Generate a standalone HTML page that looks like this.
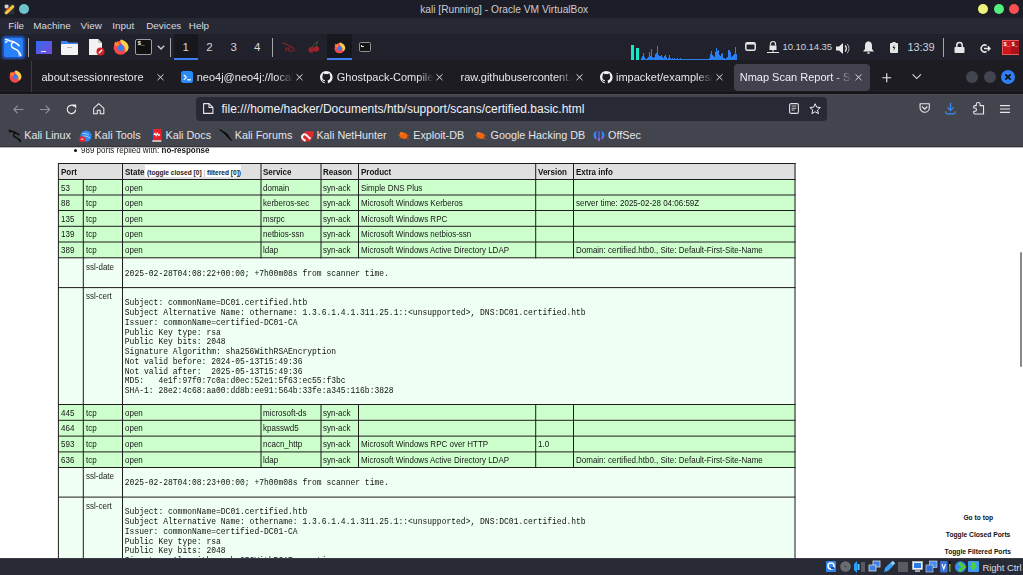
<!DOCTYPE html>
<html><head><meta charset="utf-8"><style>
*{margin:0;padding:0;box-sizing:border-box}
html,body{width:1023px;height:575px;overflow:hidden;background:#fff;font-family:"Liberation Sans",sans-serif}
.a{position:absolute}
.t{position:absolute;white-space:nowrap;line-height:1}
svg{position:absolute;overflow:visible}
.mi{color:#d9dbe0;font-size:9.6px;top:21px}
.tabt{color:#e6e6ea;font-size:11px;top:72px}
.bm{color:#e2e2e6;font-size:11px;top:130px}
.c8{position:absolute;white-space:nowrap;line-height:1;font-size:8px;color:#151515}
.cb{position:absolute;white-space:nowrap;line-height:1;font-size:8px;font-weight:bold;color:#111}
.mono{position:absolute;font-family:"Liberation Mono",monospace;font-size:8px;color:#111;line-height:7.967px;white-space:pre;transform:scaleY(1.22);transform-origin:0 0}
</style></head><body>
<div class="a" style="left:0px;top:0px;width:1023px;height:18px;background:#1c1d27;"></div>
<div class="t" style="left:420.2px;top:4.77px;font-size:10.2px;color:#c9cdd5;">kali [Running] - Oracle VM VirtualBox</div>
<svg style="left:3.6px;top:4px" width="10.2" height="10.3" viewBox="0 0 10.2 10.3"><rect x="0" y="0" width="10.2" height="10.3" fill="#30323a"/><path d="M2.2 8.8 L8.8 2.6" stroke="#fcc540" stroke-width="3" stroke-linecap="round"/><circle cx="2.6" cy="2.4" r="2" fill="#d4d4d8"/><path d="M2.5 5.2 C3.5 4.3 4.5 4.3 5.5 5" stroke="#e8560f" stroke-width="1.4" fill="none"/></svg>
<svg style="left:19px;top:4px" width="10" height="10"><circle cx="5" cy="5" r="5" fill="#6ec3cd"/></svg>
<svg style="left:978px;top:4px" width="10" height="10"><circle cx="5" cy="5" r="5" fill="#eef27c"/></svg>
<svg style="left:993.8px;top:4px" width="10" height="10"><circle cx="5" cy="5" r="5" fill="#52f07c"/></svg>
<svg style="left:1009.4px;top:4px" width="10" height="10"><circle cx="5" cy="5" r="5" fill="#f84f50"/></svg>
<div class="a" style="left:0px;top:18px;width:1023px;height:16px;background:#262833;"></div>
<div class="t" style="left:8.2px;top:21.22px;font-size:9.9px;color:#d9dbe0;">File</div>
<div class="t" style="left:33.3px;top:21.22px;font-size:9.9px;color:#d9dbe0;">Machine</div>
<div class="t" style="left:80.6px;top:21.22px;font-size:9.9px;color:#d9dbe0;">View</div>
<div class="t" style="left:112.3px;top:21.22px;font-size:9.9px;color:#d9dbe0;">Input</div>
<div class="t" style="left:146.2px;top:21.22px;font-size:9.9px;color:#d9dbe0;">Devices</div>
<div class="t" style="left:188.8px;top:21.22px;font-size:9.9px;color:#d9dbe0;">Help</div>
<div class="a" style="left:0px;top:34px;width:1023px;height:26px;background:#20212b;"></div>
<div class="a" style="left:3.5px;top:37.7px;width:19px;height:19px;border-radius:2px;background:#2a80f8;box-shadow:0 0 2.5px 1.5px rgba(30,110,255,0.75)"></div>
<svg style="left:3.5px;top:37.7px" width="19" height="19" viewBox="0 0 19 19"><path d="M1 1.2 L4 2 L6 3 C9 3.3 12 4 15.5 8.3" stroke="#fff" stroke-width="1.5" fill="none"/><path d="M0.8 3.5 L5 2.5 L1.5 5.5 Z" fill="#e8f0ff"/><path d="M9.5 4 C6.5 5.5 6.5 9 10 10.5 C13 11.5 15.5 13 17 18" stroke="#fff" stroke-width="1.4" fill="none"/><path d="M14.5 14 L15.5 18.5" stroke="#dde8ff" stroke-width="1" fill="none"/></svg>
<div class="a" style="left:28.2px;top:38.2px;width:1.2px;height:18.4px;background:#a4a6ac;"></div>
<div class="a" style="left:36px;top:40.5px;width:16px;height:13px;background:linear-gradient(135deg,#2f6cf0,#7a4ad8)"></div>
<div class="a" style="left:41px;top:51px;width:5px;height:1px;background:#e8e8ff;"></div>
<svg style="left:61px;top:40px" width="17" height="15" viewBox="0 0 17 15"><path d="M0 1 L6 1 L7.5 2.5 L17 2.5 L17 5 L0 5 Z" fill="#3b82f6"/><rect x="0" y="4" width="17" height="11" rx="1" fill="#f4f4f6"/><rect x="6" y="7" width="5" height="1" fill="#bbb"/></svg>
<svg style="left:89px;top:39px" width="16" height="17" viewBox="0 0 16 17"><path d="M0 0 L9 0 L13 4 L13 16 L0 16 Z" fill="#f2f2f2"/><path d="M9 0 L9 4 L13 4 Z" fill="#ccc"/><circle cx="11.5" cy="12.5" r="4" fill="#d01f26"/><path d="M9.8 14.2 L13.2 10.8" stroke="#fff" stroke-width="1.3"/></svg>
<svg style="left:113px;top:39.3px" width="16" height="16" viewBox="0 0 16 16"><circle cx="7.6" cy="8.8" r="7" fill="#f64a4a"/><path d="M7.2 1.5 C8 0.2 9 0.4 9.5 1 C12 1.8 15.6 4.5 15.6 8.2 C15.6 10.5 14.5 12 12.8 13 C12.6 10.5 12 8 10 6.3 C8.6 5 7.5 4 7.2 1.5 Z" fill="#fcd14f"/><path d="M1.2 5 L2.4 2.2 L3.6 4 L4.6 2.4 L5.8 4.8 L6.6 6.5 L3 7.5 Z" fill="#ff8a25"/><path d="M12.8 13 C13 11.5 12.6 10 11.8 9.2 L11.2 11.5 Z" fill="#ff9a30"/><circle cx="7.9" cy="8.9" r="3.1" fill="#3a7cf2"/><path d="M6.2 6.3 C7 5.3 8.5 5.2 9.4 6 L8 7 Z" fill="#7b4be0"/></svg>
<div class="a" style="left:135px;top:39.2px;width:16.6px;height:15.6px;border:1.2px solid #9b9da3;border-radius:2px;background:#111"></div>
<div class="t" style="left:137.5px;top:40.5px;font-size:6px;color:#eee;font-weight:bold;font-family:'Liberation Mono'">$_</div>
<svg style="left:156.5px;top:44.5px" width="8" height="5" viewBox="0 0 8 5"><path d="M0.8 0.8 L4 4 L7.2 0.8" stroke="#c9ccd2" stroke-width="1.4" fill="none"/></svg>
<div class="a" style="left:170.3px;top:38.2px;width:1.2px;height:18.4px;background:#a4a6ac;"></div>
<div class="a" style="left:174px;top:34px;width:24px;height:26px;background:#17181e;"></div>
<div class="a" style="left:174px;top:57.8px;width:24px;height:2.2px;background:#3d7ff0;"></div>
<div class="t" style="left:175.7px;width:20px;text-align:center;top:42.17px;font-size:11.5px;color:#d4d8de">1</div>
<div class="t" style="left:199.4px;width:20px;text-align:center;top:42.17px;font-size:11.5px;color:#d4d8de">2</div>
<div class="t" style="left:223.6px;width:20px;text-align:center;top:42.17px;font-size:11.5px;color:#d4d8de">3</div>
<div class="t" style="left:247.3px;width:20px;text-align:center;top:42.17px;font-size:11.5px;color:#d4d8de">4</div>
<div class="a" style="left:272.2px;top:38.2px;width:1.2px;height:18.4px;background:#a4a6ac;"></div>
<svg style="left:282px;top:42px" width="13" height="10" viewBox="0 0 13 10"><path d="M0.5 0.5 C3 2 6 3 8 4 C10 5 12 7 12.5 9 M4 5 L4 9 M4 7 L7 7 M7 5 L7 9 L11 9" stroke="#8e2424" stroke-width="1.1" fill="none"/></svg>
<svg style="left:308px;top:41px" width="12" height="12" viewBox="0 0 12 12"><path d="M4 7 C5 4 7 2 10 0.5 M8.5 7 C8 4 9 2 10 0.5" stroke="#3f5a2a" stroke-width="0.9" fill="none"/><circle cx="3.2" cy="8.8" r="2.8" fill="#96222a"/><circle cx="8.3" cy="8" r="2.8" fill="#a0242c"/></svg>
<div class="a" style="left:327px;top:34px;width:25px;height:26px;background:#17181e;"></div>
<div class="a" style="left:327px;top:57.6px;width:25px;height:2.4px;background:#3d7ff0;"></div>
<svg style="left:333.5px;top:41.5px" width="11.5" height="11.5" viewBox="0 0 16 16"><circle cx="7.6" cy="8.8" r="7" fill="#f64a4a"/><path d="M7.2 1.5 C8 0.2 9 0.4 9.5 1 C12 1.8 15.6 4.5 15.6 8.2 C15.6 10.5 14.5 12 12.8 13 C12.6 10.5 12 8 10 6.3 C8.6 5 7.5 4 7.2 1.5 Z" fill="#fcd14f"/><path d="M1.2 5 L2.4 2.2 L3.6 4 L4.6 2.4 L5.8 4.8 L6.6 6.5 L3 7.5 Z" fill="#ff8a25"/><path d="M12.8 13 C13 11.5 12.6 10 11.8 9.2 L11.2 11.5 Z" fill="#ff9a30"/><circle cx="7.9" cy="8.9" r="3.1" fill="#3a7cf2"/><path d="M6.2 6.3 C7 5.3 8.5 5.2 9.4 6 L8 7 Z" fill="#7b4be0"/></svg>
<div class="a" style="left:358.5px;top:42px;width:12.3px;height:10.4px;border:1.2px solid #8e9096;border-radius:1.5px;background:#141414"></div>
<div class="a" style="left:361px;top:44.5px;width:1px;height:2px;background:#ddd;"></div>
<div class="a" style="left:362px;top:46px;width:2px;height:0.8px;background:#ddd;"></div>
<div class="a" style="left:631px;top:45.3px;width:3.4px;height:14.7px;background:#19e8c8;"></div>
<div class="a" style="left:635.9px;top:47.6px;width:3.2px;height:12.4px;background:#19e8c8;"></div>
<svg style="left:641px;top:44px" width="96" height="16" viewBox="0 0 96 16"><rect x="0" y="14" width="1" height="2" fill="#2a80f2"/><rect x="1" y="12" width="1" height="4" fill="#2a80f2"/><rect x="2" y="9" width="1" height="7" fill="#2a80f2"/><rect x="3" y="13" width="1" height="3" fill="#2a80f2"/><rect x="4" y="15" width="1" height="1" fill="#2a80f2"/><rect x="5" y="15" width="1" height="1" fill="#2a80f2"/><rect x="6" y="14" width="1" height="2" fill="#2a80f2"/><rect x="7" y="13" width="1" height="3" fill="#2a80f2"/><rect x="8" y="8" width="1" height="8" fill="#2a80f2"/><rect x="9" y="12" width="1" height="4" fill="#2a80f2"/><rect x="10" y="5" width="1" height="11" fill="#2a80f2"/><rect x="11" y="13" width="1" height="3" fill="#2a80f2"/><rect x="12" y="14" width="1" height="2" fill="#2a80f2"/><rect x="13" y="13" width="1" height="3" fill="#2a80f2"/><rect x="14" y="10" width="1" height="6" fill="#2a80f2"/><rect x="15" y="9" width="1" height="7" fill="#2a80f2"/><rect x="16" y="2" width="1" height="14" fill="#2a80f2"/><rect x="17" y="11" width="1" height="5" fill="#2a80f2"/><rect x="18" y="12" width="1" height="4" fill="#2a80f2"/><rect x="19" y="12" width="1" height="4" fill="#2a80f2"/><rect x="20" y="11" width="1" height="5" fill="#2a80f2"/><rect x="21" y="13" width="1" height="3" fill="#2a80f2"/><rect x="22" y="14" width="1" height="2" fill="#2a80f2"/><rect x="23" y="12" width="1" height="4" fill="#2a80f2"/><rect x="24" y="11" width="1" height="5" fill="#2a80f2"/><rect x="25" y="13" width="1" height="3" fill="#2a80f2"/><rect x="26" y="15" width="1" height="1" fill="#2a80f2"/><rect x="27" y="14" width="1" height="2" fill="#2a80f2"/><rect x="28" y="11" width="1" height="5" fill="#2a80f2"/><rect x="29" y="14" width="1" height="2" fill="#2a80f2"/><rect x="30" y="15" width="1" height="1" fill="#2a80f2"/><rect x="31" y="14" width="1" height="2" fill="#2a80f2"/><rect x="32" y="15" width="1" height="1" fill="#2a80f2"/><rect x="33" y="14" width="1" height="2" fill="#2a80f2"/><rect x="34" y="15" width="1" height="1" fill="#2a80f2"/><rect x="35" y="15" width="1" height="1" fill="#2a80f2"/><rect x="36" y="14" width="1" height="2" fill="#2a80f2"/><rect x="37" y="15" width="1" height="1" fill="#2a80f2"/><rect x="38" y="15" width="1" height="1" fill="#2a80f2"/><rect x="39" y="14" width="1" height="2" fill="#2a80f2"/><rect x="40" y="15" width="1" height="1" fill="#2a80f2"/><rect x="41" y="15" width="1" height="1" fill="#2a80f2"/><rect x="42" y="15" width="1" height="1" fill="#2a80f2"/><rect x="43" y="15" width="1" height="1" fill="#2a80f2"/><rect x="44" y="15" width="1" height="1" fill="#2a80f2"/><rect x="45" y="15" width="1" height="1" fill="#2a80f2"/><rect x="46" y="15" width="1" height="1" fill="#2a80f2"/><rect x="47" y="15" width="1" height="1" fill="#2a80f2"/><rect x="48" y="15" width="1" height="1" fill="#2a80f2"/><rect x="49" y="15" width="1" height="1" fill="#2a80f2"/><rect x="50" y="15" width="1" height="1" fill="#2a80f2"/><rect x="51" y="15" width="1" height="1" fill="#2a80f2"/><rect x="52" y="15" width="1" height="1" fill="#2a80f2"/><rect x="53" y="15" width="1" height="1" fill="#2a80f2"/><rect x="54" y="15" width="1" height="1" fill="#2a80f2"/><rect x="55" y="15" width="1" height="1" fill="#2a80f2"/><rect x="56" y="15" width="1" height="1" fill="#2a80f2"/><rect x="57" y="15" width="1" height="1" fill="#2a80f2"/><rect x="58" y="15" width="1" height="1" fill="#2a80f2"/><rect x="59" y="15" width="1" height="1" fill="#2a80f2"/><rect x="60" y="15" width="1" height="1" fill="#2a80f2"/><rect x="61" y="15" width="1" height="1" fill="#2a80f2"/><rect x="62" y="15" width="1" height="1" fill="#2a80f2"/><rect x="63" y="15" width="1" height="1" fill="#2a80f2"/><rect x="64" y="15" width="1" height="1" fill="#2a80f2"/><rect x="65" y="15" width="1" height="1" fill="#2a80f2"/><rect x="66" y="15" width="1" height="1" fill="#2a80f2"/><rect x="67" y="15" width="1" height="1" fill="#2a80f2"/><rect x="68" y="14" width="1" height="2" fill="#2a80f2"/><rect x="69" y="10" width="1" height="6" fill="#2a80f2"/><rect x="70" y="7" width="1" height="9" fill="#2a80f2"/><rect x="71" y="11" width="1" height="5" fill="#2a80f2"/><rect x="72" y="12" width="1" height="4" fill="#2a80f2"/><rect x="73" y="13" width="1" height="3" fill="#2a80f2"/><rect x="74" y="8" width="1" height="8" fill="#2a80f2"/><rect x="75" y="4" width="1" height="12" fill="#2a80f2"/><rect x="76" y="7" width="1" height="9" fill="#2a80f2"/><rect x="77" y="6" width="1" height="10" fill="#2a80f2"/><rect x="78" y="11" width="1" height="5" fill="#2a80f2"/><rect x="79" y="12" width="1" height="4" fill="#2a80f2"/><rect x="80" y="10" width="1" height="6" fill="#2a80f2"/><rect x="81" y="9" width="1" height="7" fill="#2a80f2"/><rect x="82" y="14" width="1" height="2" fill="#2a80f2"/><rect x="83" y="14" width="1" height="2" fill="#2a80f2"/><rect x="84" y="15" width="1" height="1" fill="#2a80f2"/><rect x="85" y="14" width="1" height="2" fill="#2a80f2"/><rect x="86" y="13" width="1" height="3" fill="#2a80f2"/><rect x="87" y="6" width="1" height="10" fill="#2a80f2"/><rect x="88" y="6" width="1" height="10" fill="#2a80f2"/><rect x="89" y="8" width="1" height="8" fill="#2a80f2"/><rect x="90" y="13" width="1" height="3" fill="#2a80f2"/><rect x="91" y="12" width="1" height="4" fill="#2a80f2"/><rect x="92" y="11" width="1" height="5" fill="#2a80f2"/><rect x="93" y="10" width="1" height="6" fill="#2a80f2"/><rect x="94" y="3" width="1" height="13" fill="#2a80f2"/><rect x="95" y="10" width="1" height="6" fill="#2a80f2"/></svg>
<svg style="left:744.5px;top:42px" width="11" height="9" viewBox="0 0 11 9"><rect x="0.8" y="0.8" width="9.4" height="7.4" rx="1.5" fill="none" stroke="#e6e6e6" stroke-width="1.5"/><rect x="1" y="1" width="9" height="1.6" fill="#e6e6e6"/></svg>
<svg style="left:767px;top:41px" width="12" height="12" viewBox="0 0 12 12"><path d="M3.5 4.5 V3 A2.5 2.5 0 0 1 8.5 3 V4.5" stroke="#e6e6e6" stroke-width="1.2" fill="none"/><rect x="2.5" y="4.5" width="7" height="4.5" fill="#e6e6e6"/><rect x="5.5" y="9" width="1" height="2" fill="#e6e6e6"/><rect x="0" y="11" width="12" height="1" fill="#e6e6e6"/></svg>
<div class="t" style="left:782.4px;top:42.17px;font-size:9.6px;color:#cfd3db;letter-spacing:-0.1px">10.10.14.35</div>
<svg style="left:836px;top:42.5px" width="14" height="11" viewBox="0 0 14 11"><path d="M0 3.5 H3 L7 0 V11 L3 7.5 H0 Z" fill="#e6e6e6"/><path d="M9 2.5 A4 4 0 0 1 9 8.5" stroke="#e6e6e6" stroke-width="1.3" fill="none"/><path d="M11 0.8 A6.5 6.5 0 0 1 11 10.2" stroke="#aaa" stroke-width="1" fill="none"/></svg>
<svg style="left:863px;top:40.5px" width="11" height="13" viewBox="0 0 11 13"><path d="M5.5 0.5 C8.5 0.5 9 3 9 5 V8 L11 10.5 H0 L2 8 V5 C2 3 2.5 0.5 5.5 0.5 Z" fill="#e6e6e6"/><rect x="4.2" y="11.2" width="2.6" height="1.5" rx="0.7" fill="#e6e6e6"/></svg>
<svg style="left:890px;top:42px" width="8" height="11" viewBox="0 0 8 11"><rect x="2.5" y="0" width="3" height="1.2" fill="#e6e6e6"/><rect x="0" y="1" width="8" height="10" rx="1" fill="#e6e6e6"/><path d="M4.5 2.5 L2.5 6 H4 L3.5 9 L5.5 5.2 H4 Z" fill="#222"/></svg>
<div class="t" style="left:907.4px;top:41.69px;font-size:11px;color:#cfd3db;letter-spacing:-0.1px">13:39</div>
<div class="a" style="left:943.2px;top:38.2px;width:1.2px;height:18.4px;background:#a4a6ac;"></div>
<svg style="left:954px;top:41.5px" width="11" height="11" viewBox="0 0 11 11"><path d="M2.8 5 V3.3 A2.7 2.7 0 0 1 8.2 3.3 V5" stroke="#e6e6e6" stroke-width="1.5" fill="none"/><rect x="0.5" y="5" width="10" height="6" rx="0.8" fill="#e6e6e6"/></svg>
<svg style="left:980px;top:44px" width="11" height="9" viewBox="0 0 11 9"><path d="M6.5 1.5 A3.5 3.5 0 1 0 6.5 7.5" stroke="#e6e6e6" stroke-width="1.5" fill="none"/><path d="M4 4.5 H10 M7.8 2.3 L10 4.5 L7.8 6.7" stroke="#e6e6e6" stroke-width="1.4" fill="none"/></svg>
<div class="a" style="left:1002px;top:40px;width:17px;height:14.6px;background:#d0141c;border:0.8px solid #e85a5a"></div>
<div class="a" style="left:1011px;top:41px;width:7.5px;height:12.6px;background:#a8121a;"></div>
<div class="t" style="left:1003.5px;top:41.5px;font-size:5.5px;color:#fff;font-weight:bold;font-family:'Liberation Mono'">$_</div>
<div class="t" style="left:1011.5px;top:41.5px;font-size:5.5px;color:#fff;font-weight:bold;font-family:'Liberation Mono'">$_</div>
<div class="a" style="left:0px;top:60px;width:1023px;height:34px;background:#1c1c22;"></div>
<div class="a" style="left:31px;top:61px;width:1px;height:31px;background:#3a3a42;"></div>
<svg style="left:8.5px;top:70.2px" width="12.8" height="12.8" viewBox="0 0 16 16"><circle cx="7.6" cy="8.8" r="7" fill="#f64a4a"/><path d="M7.2 1.5 C8 0.2 9 0.4 9.5 1 C12 1.8 15.6 4.5 15.6 8.2 C15.6 10.5 14.5 12 12.8 13 C12.6 10.5 12 8 10 6.3 C8.6 5 7.5 4 7.2 1.5 Z" fill="#fcd14f"/><path d="M1.2 5 L2.4 2.2 L3.6 4 L4.6 2.4 L5.8 4.8 L6.6 6.5 L3 7.5 Z" fill="#ff8a25"/><path d="M12.8 13 C13 11.5 12.6 10 11.8 9.2 L11.2 11.5 Z" fill="#ff9a30"/><circle cx="7.9" cy="8.9" r="3.1" fill="#3a7cf2"/><path d="M6.2 6.3 C7 5.3 8.5 5.2 9.4 6 L8 7 Z" fill="#7b4be0"/></svg>
<div class="t" style="left:41.4px;top:72.49px;font-size:11px;color:#e6e6ea;width:140px;overflow:hidden;-webkit-mask-image:linear-gradient(90deg,#000 0,#000 124px,transparent 140px)">about:sessionrestore</div>
<svg style="left:156.8px;top:73.8px" width="7" height="6.5" viewBox="0 0 7 6.5"><path d="M0.5 0.3 L6.5 6.2 M6.5 0.3 L0.5 6.2" stroke="#e0e0e4" stroke-width="1.0"/></svg>
<div class="a" style="left:181px;top:71px;width:12px;height:12px;border-radius:2.5px;background:#2a8af6"></div>
<svg style="left:182.5px;top:73.5px" width="9" height="7" viewBox="0 0 9 7"><path d="M0.8 0.8 L3.3 3.3 L0.8 5.8" stroke="#fff" stroke-width="1.2" fill="none"/><rect x="4" y="5.2" width="4" height="1.2" fill="#fff"/></svg>
<div class="t" style="left:196.7px;top:72.49px;font-size:11px;color:#e6e6ea;width:96px;overflow:hidden;-webkit-mask-image:linear-gradient(90deg,#000 0,#000 80px,transparent 96px)">neo4j@neo4j://localhost</div>
<svg style="left:296px;top:73.8px" width="7" height="6.5" viewBox="0 0 7 6.5"><path d="M0.5 0.3 L6.5 6.2 M6.5 0.3 L0.5 6.2" stroke="#e0e0e4" stroke-width="1.0"/></svg>
<svg style="left:320px;top:70.8px" width="12.6" height="12.6" viewBox="0 0 16 16"><path fill="#f0f0f2" d="M8 0C3.58 0 0 3.58 0 8c0 3.54 2.29 6.53 5.47 7.59.4.07.55-.17.55-.38 0-.19-.01-.82-.01-1.49-2.01.37-2.53-.49-2.69-.94-.09-.23-.48-.94-.82-1.13-.28-.15-.68-.52-.01-.53.63-.01 1.08.58 1.23.82.72 1.21 1.87.87 2.33.66.07-.52.28-.87.51-1.07-1.78-.2-3.64-.89-3.640-3.950 0-.87.31-1.590.82-2.150-.08-.2-.36-1.020.08-2.120 0 0 .67-.21 2.2.82.64-.18 1.32-.27 2-.27.68 0 1.36.09 2 .27 1.53-1.04 2.2-.82 2.2-.82.44 1.1.16 1.92.08 2.12.51.56.82 1.27.82 2.15 0 3.07-1.87 3.75-3.65 3.95.29.25.54.73.54 1.48 0 1.07-.01 1.93-.01 2.2 0 .21.15.46.55.38A8.013 8.013 0 0016 8c0-4.42-3.58-8-8-8z"/></svg>
<div class="t" style="left:336.8px;top:72.49px;font-size:11px;color:#e6e6ea;width:97px;overflow:hidden;-webkit-mask-image:linear-gradient(90deg,#000 0,#000 81px,transparent 97px)">Ghostpack-CompiledBinaries</div>
<svg style="left:436.4px;top:73.8px" width="7" height="6.5" viewBox="0 0 7 6.5"><path d="M0.5 0.3 L6.5 6.2 M6.5 0.3 L0.5 6.2" stroke="#e0e0e4" stroke-width="1.0"/></svg>
<div class="t" style="left:460.6px;top:72.49px;font-size:11px;color:#e6e6ea;width:112px;overflow:hidden;-webkit-mask-image:linear-gradient(90deg,#000 0,#000 96px,transparent 112px)">raw.githubusercontent.com</div>
<svg style="left:575.8px;top:73.8px" width="7" height="6.5" viewBox="0 0 7 6.5"><path d="M0.5 0.3 L6.5 6.2 M6.5 0.3 L0.5 6.2" stroke="#e0e0e4" stroke-width="1.0"/></svg>
<svg style="left:600px;top:70.8px" width="12.6" height="12.6" viewBox="0 0 16 16"><path fill="#f0f0f2" d="M8 0C3.58 0 0 3.58 0 8c0 3.54 2.29 6.53 5.47 7.59.4.07.55-.17.55-.38 0-.19-.01-.82-.01-1.49-2.01.37-2.53-.49-2.69-.94-.09-.23-.48-.94-.82-1.13-.28-.15-.68-.52-.01-.53.63-.01 1.08.58 1.23.82.72 1.21 1.87.87 2.33.66.07-.52.28-.87.51-1.07-1.78-.2-3.64-.89-3.640-3.950 0-.87.31-1.590.82-2.150-.08-.2-.36-1.020.08-2.120 0 0 .67-.21 2.2.82.64-.18 1.32-.27 2-.27.68 0 1.36.09 2 .27 1.53-1.04 2.2-.82 2.2-.82.44 1.1.16 1.92.08 2.12.51.56.82 1.27.82 2.15 0 3.07-1.87 3.75-3.65 3.95.29.25.54.73.54 1.48 0 1.07-.01 1.93-.01 2.2 0 .21.15.46.55.38A8.013 8.013 0 0016 8c0-4.42-3.58-8-8-8z"/></svg>
<div class="t" style="left:616px;top:72.49px;font-size:11px;color:#e6e6ea;width:97px;overflow:hidden;-webkit-mask-image:linear-gradient(90deg,#000 0,#000 81px,transparent 97px)">impacket/examples/ntlmrelayx</div>
<svg style="left:716px;top:73.8px" width="7" height="6.5" viewBox="0 0 7 6.5"><path d="M0.5 0.3 L6.5 6.2 M6.5 0.3 L0.5 6.2" stroke="#e0e0e4" stroke-width="1.0"/></svg>
<div class="a" style="left:734px;top:64px;width:136px;height:26.5px;background:#42414d;border-radius:4px;"></div>
<div class="t" style="left:739.7px;top:72.49px;font-size:11px;color:#f0f0f4;width:112px;overflow:hidden;-webkit-mask-image:linear-gradient(90deg,#000 0,#000 96px,transparent 112px)">Nmap Scan Report - Scan</div>
<svg style="left:855.2px;top:73.8px" width="7" height="6.5" viewBox="0 0 7 6.5"><path d="M0.5 0.3 L6.5 6.2 M6.5 0.3 L0.5 6.2" stroke="#e0e0e4" stroke-width="1.0"/></svg>
<svg style="left:881.8px;top:73.2px" width="9.5" height="9.5" viewBox="0 0 10 10"><path d="M5 0.3 V9.7 M0.3 5 H9.7" stroke="#e8e8ec" stroke-width="1.2"/></svg>
<svg style="left:911.9px;top:74.3px" width="9.5" height="5.5" viewBox="0 0 10 6"><path d="M0.5 0.5 L5 5 L9.5 0.5" stroke="#e0e0e4" stroke-width="1.2" fill="none"/></svg>
<svg style="left:966px;top:71px" width="12" height="12"><circle cx="6" cy="6" r="6" fill="#42444f"/></svg>
<svg style="left:984px;top:71px" width="12" height="12"><circle cx="6" cy="6" r="6" fill="#42444f"/></svg>
<svg style="left:1001px;top:70px" width="14" height="14" viewBox="0 0 14 14"><circle cx="7" cy="7" r="7" fill="#2f7ff7"/><path d="M4.3 4.3 L9.7 9.7 M9.7 4.3 L4.3 9.7" stroke="#111" stroke-width="1.8"/></svg>
<div class="a" style="left:0px;top:93.5px;width:1023px;height:53.5px;background:#43454e;"></div>
<div class="a" style="left:0px;top:93.6px;width:1023px;height:1px;background:#4b4c55;"></div>
<div class="a" style="left:0px;top:92px;width:1023px;height:1.6px;background:#141419;"></div>
<div class="a" style="left:0px;top:146px;width:1023px;height:1.2px;background:#34343b;"></div>
<svg style="left:12.7px;top:104.7px" width="10.5" height="9" viewBox="0 0 10.5 9"><path d="M10.5 4.5 H1 M4.8 0.6 L0.9 4.5 L4.8 8.4" stroke="#8e8e95" stroke-width="1.2" fill="none"/></svg>
<svg style="left:39.6px;top:104.7px" width="10.5" height="9" viewBox="0 0 10.5 9"><path d="M0 4.5 H9.5 M5.7 0.6 L9.6 4.5 L5.7 8.4" stroke="#8e8e95" stroke-width="1.2" fill="none"/></svg>
<svg style="left:66.3px;top:104px" width="11" height="11" viewBox="0 0 11 11"><path d="M9.6 5.5 A4.2 4.2 0 1 1 8.2 2.3" stroke="#ececf0" stroke-width="1.2" fill="none"/><path d="M6.3 0.5 L10.2 0.5 L10.2 4.4 Z" fill="#ececf0"/></svg>
<svg style="left:92.7px;top:103px" width="11.5" height="11.5" viewBox="0 0 12 12"><path d="M0.7 5.5 L6 0.7 L11.3 5.5 V11.3 H7.5 V7.5 H4.5 V11.3 H0.7 Z" stroke="#ececf0" stroke-width="1.1" fill="none" stroke-linejoin="round"/></svg>
<div class="a" style="left:196.2px;top:97.2px;width:630.6px;height:23.4px;background:#272935;border-radius:4px;"></div>
<svg style="left:203px;top:103.2px" width="10.5" height="11" viewBox="0 0 10.5 11"><path d="M0.6 0.6 H6 L9.9 4.5 V10.4 H0.6 Z" stroke="#e6e6ea" stroke-width="1.1" fill="none" stroke-linejoin="round"/><path d="M6 0.6 V4.5 H9.9" stroke="#e6e6ea" stroke-width="1.1" fill="none"/></svg>
<div class="t" style="left:221.5px;top:102.74px;font-size:12.0px;color:#f2f2f4;">file:///home/hacker/Documents/htb/support/scans/certified.basic.html</div>
<svg style="left:788.7px;top:103px" width="10" height="11" viewBox="0 0 10 11"><rect x="0.6" y="0.6" width="8.8" height="9.8" rx="1.5" stroke="#e0e0e4" stroke-width="1.1" fill="none"/><rect x="2.6" y="2.5" width="4.8" height="1.2" fill="#aaa"/><rect x="2.6" y="4.8" width="4.8" height="0.9" fill="#ddd"/><rect x="2.6" y="6.6" width="3" height="0.9" fill="#ddd"/></svg>
<svg style="left:808.6px;top:102.7px" width="12.3" height="11.5" viewBox="0 0 24 23"><path d="M12 1.5 L15 8.3 L22.5 9 L16.8 14 L18.5 21.3 L12 17.5 L5.5 21.3 L7.2 14 L1.5 9 L9 8.3 Z" stroke="#ececf0" stroke-width="2" fill="none" stroke-linejoin="round"/></svg>
<svg style="left:918.6px;top:103.4px" width="11.4" height="10.2" viewBox="0 0 12 11"><path d="M1 0.8 H11 V5 A5 5 0 0 1 1 5 Z" stroke="#e6e6ea" stroke-width="1.2" fill="none" stroke-linejoin="round"/><path d="M3.2 3.8 L6 6.6 L8.8 3.8" stroke="#e6e6ea" stroke-width="1.3" fill="none"/></svg>
<svg style="left:945.4px;top:102.6px" width="11" height="11.6" viewBox="0 0 11 12"><path d="M5.5 0 V7.5 M2.3 4.5 L5.5 7.6 L8.7 4.5" stroke="#3a8bf5" stroke-width="1.3" fill="none"/><path d="M0.6 8.5 V9.5 A1.8 1.8 0 0 0 2.4 11.3 H8.6 A1.8 1.8 0 0 0 10.4 9.5 V8.5" stroke="#3a8bf5" stroke-width="1.2" fill="none"/></svg>
<svg style="left:972.7px;top:102.2px" width="11.2" height="12.6" viewBox="0 0 11 12.5"><path d="M3.2 3.6 V2.4 A1.9 1.9 0 0 1 7 2.4 V3.6 H10.4 V11.9 H1.6 A0.9 0.9 0 0 1 0.7 11 V9.2 H1.8 A1.6 1.6 0 0 0 1.8 6 H0.7 V4.5 A0.9 0.9 0 0 1 1.6 3.6 Z" stroke="#e6e6ea" stroke-width="1.1" fill="none" stroke-linejoin="round"/></svg>
<svg style="left:1000px;top:104.6px" width="10" height="8" viewBox="0 0 10 8"><path d="M0 0.6 H10 M0 4 H10 M0 7.4 H10" stroke="#e6e6ea" stroke-width="1.2"/></svg>
<svg style="left:8px;top:128.5px" width="14" height="14" viewBox="0 0 14 14"><path d="M1 1.5 C3 2 5 2.5 7 3.5 C9 4.5 10.5 5 11.5 6.2" stroke="#0d0d0d" stroke-width="1.6" fill="none"/><path d="M0.5 0.5 L4 1.5 L1.5 4 Z" fill="#0d0d0d"/><path d="M7.5 4 C5 5 5 7 7 8 C9 9 11 9.5 12.5 12.8" stroke="#0d0d0d" stroke-width="1.5" fill="none"/><path d="M11 10.5 L12.8 13 L11.8 10.2" stroke="#0d0d0d" stroke-width="1.2" fill="none"/></svg>
<div class="t" style="left:24.2px;top:130.16px;font-size:10.8px;color:#e4e4e8;">Kali Linux</div>
<svg style="left:78.5px;top:129.5px" width="13" height="12.5" viewBox="0 0 13 12.5"><circle cx="7" cy="6" r="5.6" fill="#2a86f0"/><path d="M3.5 3.5 C6 3 8 4 10 5 M4.5 6 C7 5.5 9 7 11 8" stroke="#bfe0ff" stroke-width="0.9" fill="none"/><circle cx="3.2" cy="9.2" r="3" fill="#e4252b"/><rect x="1.8" y="8.6" width="2.8" height="1.2" fill="#f8c0c0"/></svg>
<div class="t" style="left:94.6px;top:130.16px;font-size:10.8px;color:#e4e4e8;">Kali Tools</div>
<svg style="left:151.8px;top:129px" width="9.5" height="13" viewBox="0 0 9.5 13"><rect x="0" y="0" width="9.5" height="11" fill="#ea2227"/><rect x="0" y="0" width="1" height="11" fill="#2a4a8a"/><rect x="0.3" y="11" width="9" height="2" fill="#c4bcbc"/><path d="M1.8 6 L3 4.3 L4.2 6.8 L5.4 4.2 L6.8 6.5 L8 5.5" stroke="#fff" stroke-width="1.1" fill="none"/></svg>
<div class="t" style="left:165.5px;top:130.16px;font-size:10.8px;color:#e4e4e8;">Kali Docs</div>
<svg style="left:218.5px;top:129px" width="13.5" height="12.5" viewBox="0 0 13.5 12.5"><path d="M0.6 0.6 L4 3.2 L6.5 5.5 L9 8.5 L12.8 11.8 L9.5 7.2 L7.5 4.5 Z" fill="#0a0a0a" stroke="#0a0a0a" stroke-width="1"/></svg>
<div class="t" style="left:234.7px;top:130.16px;font-size:10.8px;color:#e4e4e8;">Kali Forums</div>
<svg style="left:300.5px;top:130px" width="13" height="11.5" viewBox="0 0 13 11.5"><path d="M4.5 1.2 L12.5 1.2 L12.5 5.5 L9 11.5 L0.5 11.5 L0.5 6 Z" fill="#e02a2e"/><path d="M9.5 9 L5 4.8 A2.6 2.6 0 0 0 1.5 8.5 L4.5 11" stroke="#f4f4f4" stroke-width="1.9" fill="none"/></svg>
<div class="t" style="left:316.4px;top:130.16px;font-size:10.8px;color:#e4e4e8;">Kali NetHunter</div>
<svg style="left:397.5px;top:131px" width="11.5" height="9" viewBox="0 0 11.5 9"><ellipse cx="5.5" cy="4.6" rx="4.2" ry="3.1" transform="rotate(20 5.5 4.6)" fill="#f2650f"/><circle cx="3.2" cy="2.6" r="1.4" fill="#ff7a1a"/><path d="M0 4 L2 4.5 M1 7.5 L3 6.5 M9 7.5 L11 8.2 M9.5 4.5 L11.2 4.8" stroke="#c8601a" stroke-width="0.7"/></svg>
<div class="t" style="left:413.2px;top:130.16px;font-size:10.8px;color:#e4e4e8;">Exploit-DB</div>
<svg style="left:475.2px;top:131px" width="11.5" height="9" viewBox="0 0 11.5 9"><ellipse cx="5.5" cy="4.6" rx="4.2" ry="3.1" transform="rotate(20 5.5 4.6)" fill="#f2650f"/><circle cx="3.2" cy="2.6" r="1.4" fill="#ff7a1a"/><path d="M0 4 L2 4.5 M1 7.5 L3 6.5 M9 7.5 L11 8.2 M9.5 4.5 L11.2 4.8" stroke="#c8601a" stroke-width="0.7"/></svg>
<div class="t" style="left:490.5px;top:130.16px;font-size:10.8px;color:#e4e4e8;">Google Hacking DB</div>
<svg style="left:593px;top:130px" width="12" height="11.5" viewBox="0 0 12 11.5"><path d="M3.5 0.8 C1.5 1.5 0.3 3.5 0.5 5.8 C0.8 7.8 2 9 3.5 9.5 C3 7 3 3.5 3.5 0.8 Z" fill="#2a8af2"/><path d="M8.5 0.8 C10.5 1.5 11.7 3.5 11.5 5.8 C11.2 7.8 10 9 8.5 9.5 C9 7 9 3.5 8.5 0.8 Z" fill="#2a8af2"/><path d="M1.5 6.5 C2 8 2.8 9 3.5 9.5 L3.3 6.5 Z M10.5 6.5 C10 8 9.2 9 8.5 9.5 L8.7 6.5 Z" fill="#9a5ae8"/><path d="M6 1 V11" stroke="#5a60d8" stroke-width="1.6"/><path d="M6 8 V11" stroke="#b060e8" stroke-width="1.4"/></svg>
<div class="t" style="left:608.1px;top:130.16px;font-size:10.8px;color:#e4e4e8;">OffSec</div>
<div class="a" style="left:0px;top:147.2px;width:1023px;height:411px;background:#ffffff;"></div>
<div class="a" style="left:0px;top:147.2px;width:1023px;height:1px;background:#b8b8bc;"></div>
<div class="a" style="left:0;top:148px;width:1023px;height:412px;overflow:hidden">
<div class="a" style="left:74px;top:1px;width:3px;height:3px;background:#111;border-radius:50%;"></div>
<div class="t" style="left:81.4px;top:-1.82px;font-size:9px;color:#151515;transform:scaleX(0.889);transform-origin:0 0;">989 ports replied with: <b>no-response</b></div>
<div class="a" style="left:58.5px;top:15.5px;width:737.0px;height:16.0px;background:#e0e0e0;"></div>
<div class="a" style="left:58.5px;top:31.5px;width:737.0px;height:15.5px;background:#ccffcc;"></div>
<div class="a" style="left:58.5px;top:47.0px;width:737.0px;height:15.5px;background:#ccffcc;"></div>
<div class="a" style="left:58.5px;top:62.5px;width:737.0px;height:15.800000000000011px;background:#ccffcc;"></div>
<div class="a" style="left:58.5px;top:78.30000000000001px;width:737.0px;height:15.699999999999989px;background:#ccffcc;"></div>
<div class="a" style="left:58.5px;top:94.0px;width:737.0px;height:15.800000000000011px;background:#ccffcc;"></div>
<div class="a" style="left:58.5px;top:109.80000000000001px;width:737.0px;height:29.80000000000001px;background:#effff4;"></div>
<div class="a" style="left:58.5px;top:139.60000000000002px;width:737.0px;height:116.89999999999998px;background:#effff4;"></div>
<div class="a" style="left:58.5px;top:256.5px;width:737.0px;height:15.800000000000011px;background:#ccffcc;"></div>
<div class="a" style="left:58.5px;top:272.3px;width:737.0px;height:15.800000000000011px;background:#ccffcc;"></div>
<div class="a" style="left:58.5px;top:288.1px;width:737.0px;height:15.799999999999955px;background:#ccffcc;"></div>
<div class="a" style="left:58.5px;top:303.9px;width:737.0px;height:15.600000000000023px;background:#ccffcc;"></div>
<div class="a" style="left:58.5px;top:319.5px;width:737.0px;height:29.600000000000023px;background:#effff4;"></div>
<div class="a" style="left:58.5px;top:349.1px;width:737.0px;height:142.89999999999998px;background:#effff4;"></div>
<div class="t" style="left:61.3px;top:19.88px;font-size:9px;font-weight:bold;color:#111;transform:scaleX(0.889);transform-origin:0 0;">Port</div>
<div class="t" style="left:124.8px;top:19.88px;font-size:9px;font-weight:bold;color:#111;transform:scaleX(0.889);transform-origin:0 0;">State</div>
<div class="a" style="left:145.3px;top:17.099999999999994px;width:95.8px;height:12.2px;background:#ffffff;"></div>
<div class="t" style="left:147px;top:21.61px;font-size:6.6px;font-weight:bold;color:#1a1a1a;">(toggle closed [0] <span style="color:#999;font-weight:normal">|</span> filtered [0])</div>
<div class="t" style="left:263.1px;top:19.88px;font-size:9px;font-weight:bold;color:#111;transform:scaleX(0.889);transform-origin:0 0;">Service</div>
<div class="t" style="left:323.3px;top:19.88px;font-size:9px;font-weight:bold;color:#111;transform:scaleX(0.889);transform-origin:0 0;">Reason</div>
<div class="t" style="left:360.5px;top:19.88px;font-size:9px;font-weight:bold;color:#111;transform:scaleX(0.889);transform-origin:0 0;">Product</div>
<div class="t" style="left:537.7px;top:19.88px;font-size:9px;font-weight:bold;color:#111;transform:scaleX(0.889);transform-origin:0 0;">Version</div>
<div class="t" style="left:575.7px;top:19.88px;font-size:9px;font-weight:bold;color:#111;transform:scaleX(0.889);transform-origin:0 0;">Extra info</div>
<div class="t" style="left:61.3px;top:35.58px;font-size:9px;color:#151515;transform:scaleX(0.889);transform-origin:0 0;">53</div>
<div class="t" style="left:85.6px;top:35.58px;font-size:9px;color:#151515;transform:scaleX(0.889);transform-origin:0 0;">tcp</div>
<div class="t" style="left:124.8px;top:35.58px;font-size:9px;color:#151515;transform:scaleX(0.889);transform-origin:0 0;">open</div>
<div class="t" style="left:263.1px;top:35.58px;font-size:9px;color:#151515;transform:scaleX(0.889);transform-origin:0 0;">domain</div>
<div class="t" style="left:323.3px;top:35.58px;font-size:9px;color:#151515;transform:scaleX(0.889);transform-origin:0 0;">syn-ack</div>
<div class="t" style="left:360.5px;top:35.58px;font-size:9px;color:#151515;transform:scaleX(0.889);transform-origin:0 0;">Simple DNS Plus</div>
<div class="t" style="left:61.3px;top:51.08px;font-size:9px;color:#151515;transform:scaleX(0.889);transform-origin:0 0;">88</div>
<div class="t" style="left:85.6px;top:51.08px;font-size:9px;color:#151515;transform:scaleX(0.889);transform-origin:0 0;">tcp</div>
<div class="t" style="left:124.8px;top:51.08px;font-size:9px;color:#151515;transform:scaleX(0.889);transform-origin:0 0;">open</div>
<div class="t" style="left:263.1px;top:51.08px;font-size:9px;color:#151515;transform:scaleX(0.889);transform-origin:0 0;">kerberos-sec</div>
<div class="t" style="left:323.3px;top:51.08px;font-size:9px;color:#151515;transform:scaleX(0.889);transform-origin:0 0;">syn-ack</div>
<div class="t" style="left:360.5px;top:51.08px;font-size:9px;color:#151515;transform:scaleX(0.889);transform-origin:0 0;">Microsoft Windows Kerberos</div>
<div class="t" style="left:575.7px;top:51.08px;font-size:9px;color:#151515;transform:scaleX(0.889);transform-origin:0 0;">server time: 2025-02-28 04:06:59Z</div>
<div class="t" style="left:61.3px;top:66.58px;font-size:9px;color:#151515;transform:scaleX(0.889);transform-origin:0 0;">135</div>
<div class="t" style="left:85.6px;top:66.58px;font-size:9px;color:#151515;transform:scaleX(0.889);transform-origin:0 0;">tcp</div>
<div class="t" style="left:124.8px;top:66.58px;font-size:9px;color:#151515;transform:scaleX(0.889);transform-origin:0 0;">open</div>
<div class="t" style="left:263.1px;top:66.58px;font-size:9px;color:#151515;transform:scaleX(0.889);transform-origin:0 0;">msrpc</div>
<div class="t" style="left:323.3px;top:66.58px;font-size:9px;color:#151515;transform:scaleX(0.889);transform-origin:0 0;">syn-ack</div>
<div class="t" style="left:360.5px;top:66.58px;font-size:9px;color:#151515;transform:scaleX(0.889);transform-origin:0 0;">Microsoft Windows RPC</div>
<div class="t" style="left:61.3px;top:82.38px;font-size:9px;color:#151515;transform:scaleX(0.889);transform-origin:0 0;">139</div>
<div class="t" style="left:85.6px;top:82.38px;font-size:9px;color:#151515;transform:scaleX(0.889);transform-origin:0 0;">tcp</div>
<div class="t" style="left:124.8px;top:82.38px;font-size:9px;color:#151515;transform:scaleX(0.889);transform-origin:0 0;">open</div>
<div class="t" style="left:263.1px;top:82.38px;font-size:9px;color:#151515;transform:scaleX(0.889);transform-origin:0 0;">netbios-ssn</div>
<div class="t" style="left:323.3px;top:82.38px;font-size:9px;color:#151515;transform:scaleX(0.889);transform-origin:0 0;">syn-ack</div>
<div class="t" style="left:360.5px;top:82.38px;font-size:9px;color:#151515;transform:scaleX(0.889);transform-origin:0 0;">Microsoft Windows netbios-ssn</div>
<div class="t" style="left:61.3px;top:98.08px;font-size:9px;color:#151515;transform:scaleX(0.889);transform-origin:0 0;">389</div>
<div class="t" style="left:85.6px;top:98.08px;font-size:9px;color:#151515;transform:scaleX(0.889);transform-origin:0 0;">tcp</div>
<div class="t" style="left:124.8px;top:98.08px;font-size:9px;color:#151515;transform:scaleX(0.889);transform-origin:0 0;">open</div>
<div class="t" style="left:263.1px;top:98.08px;font-size:9px;color:#151515;transform:scaleX(0.889);transform-origin:0 0;">ldap</div>
<div class="t" style="left:323.3px;top:98.08px;font-size:9px;color:#151515;transform:scaleX(0.889);transform-origin:0 0;">syn-ack</div>
<div class="t" style="left:360.5px;top:98.08px;font-size:9px;color:#151515;transform:scaleX(0.889);transform-origin:0 0;">Microsoft Windows Active Directory LDAP</div>
<div class="t" style="left:575.7px;top:98.08px;font-size:9px;color:#151515;transform:scaleX(0.889);transform-origin:0 0;">Domain: certified.htb0., Site: Default-First-Site-Name</div>
<div class="t" style="left:85.6px;top:114.58px;font-size:9px;color:#222;transform:scaleX(0.889);transform-origin:0 0;">ssl-date</div>
<div class="mono" style="left:124.8px;top:120.64px">2025-02-28T04:08:22+00:00; +7h00m08s from scanner time.</div>
<div class="t" style="left:85.6px;top:144.18px;font-size:9px;color:#222;transform:scaleX(0.889);transform-origin:0 0;">ssl-cert</div>
<div class="mono" style="left:124.8px;top:149.64px">Subject: commonName=DC01.certified.htb
Subject Alternative Name: othername: 1.3.6.1.4.1.311.25.1::&lt;unsupported&gt;, DNS:DC01.certified.htb
Issuer: commonName=certified-DC01-CA
Public Key type: rsa
Public Key bits: 2048
Signature Algorithm: sha256WithRSAEncryption
Not valid before: 2024-05-13T15:49:36
Not valid after:  2025-05-13T15:49:36
MD5:   4e1f:97f0:7c0a:d0ec:52e1:5f63:ec55:f3bc
SHA-1: 28e2:4c68:aa00:dd8b:ee91:564b:33fe:a345:116b:3828</div>
<div class="t" style="left:61.3px;top:260.58px;font-size:9px;color:#151515;transform:scaleX(0.889);transform-origin:0 0;">445</div>
<div class="t" style="left:85.6px;top:260.58px;font-size:9px;color:#151515;transform:scaleX(0.889);transform-origin:0 0;">tcp</div>
<div class="t" style="left:124.8px;top:260.58px;font-size:9px;color:#151515;transform:scaleX(0.889);transform-origin:0 0;">open</div>
<div class="t" style="left:263.1px;top:260.58px;font-size:9px;color:#151515;transform:scaleX(0.889);transform-origin:0 0;">microsoft-ds</div>
<div class="t" style="left:323.3px;top:260.58px;font-size:9px;color:#151515;transform:scaleX(0.889);transform-origin:0 0;">syn-ack</div>
<div class="t" style="left:61.3px;top:276.38px;font-size:9px;color:#151515;transform:scaleX(0.889);transform-origin:0 0;">464</div>
<div class="t" style="left:85.6px;top:276.38px;font-size:9px;color:#151515;transform:scaleX(0.889);transform-origin:0 0;">tcp</div>
<div class="t" style="left:124.8px;top:276.38px;font-size:9px;color:#151515;transform:scaleX(0.889);transform-origin:0 0;">open</div>
<div class="t" style="left:263.1px;top:276.38px;font-size:9px;color:#151515;transform:scaleX(0.889);transform-origin:0 0;">kpasswd5</div>
<div class="t" style="left:323.3px;top:276.38px;font-size:9px;color:#151515;transform:scaleX(0.889);transform-origin:0 0;">syn-ack</div>
<div class="t" style="left:61.3px;top:292.18px;font-size:9px;color:#151515;transform:scaleX(0.889);transform-origin:0 0;">593</div>
<div class="t" style="left:85.6px;top:292.18px;font-size:9px;color:#151515;transform:scaleX(0.889);transform-origin:0 0;">tcp</div>
<div class="t" style="left:124.8px;top:292.18px;font-size:9px;color:#151515;transform:scaleX(0.889);transform-origin:0 0;">open</div>
<div class="t" style="left:263.1px;top:292.18px;font-size:9px;color:#151515;transform:scaleX(0.889);transform-origin:0 0;">ncacn_http</div>
<div class="t" style="left:323.3px;top:292.18px;font-size:9px;color:#151515;transform:scaleX(0.889);transform-origin:0 0;">syn-ack</div>
<div class="t" style="left:360.5px;top:292.18px;font-size:9px;color:#151515;transform:scaleX(0.889);transform-origin:0 0;">Microsoft Windows RPC over HTTP</div>
<div class="t" style="left:537.7px;top:292.18px;font-size:9px;color:#151515;transform:scaleX(0.889);transform-origin:0 0;">1.0</div>
<div class="t" style="left:61.3px;top:307.98px;font-size:9px;color:#151515;transform:scaleX(0.889);transform-origin:0 0;">636</div>
<div class="t" style="left:85.6px;top:307.98px;font-size:9px;color:#151515;transform:scaleX(0.889);transform-origin:0 0;">tcp</div>
<div class="t" style="left:124.8px;top:307.98px;font-size:9px;color:#151515;transform:scaleX(0.889);transform-origin:0 0;">open</div>
<div class="t" style="left:263.1px;top:307.98px;font-size:9px;color:#151515;transform:scaleX(0.889);transform-origin:0 0;">ldap</div>
<div class="t" style="left:323.3px;top:307.98px;font-size:9px;color:#151515;transform:scaleX(0.889);transform-origin:0 0;">syn-ack</div>
<div class="t" style="left:360.5px;top:307.98px;font-size:9px;color:#151515;transform:scaleX(0.889);transform-origin:0 0;">Microsoft Windows Active Directory LDAP</div>
<div class="t" style="left:575.7px;top:307.98px;font-size:9px;color:#151515;transform:scaleX(0.889);transform-origin:0 0;">Domain: certified.htb0., Site: Default-First-Site-Name</div>
<div class="t" style="left:85.6px;top:324.28px;font-size:9px;color:#222;transform:scaleX(0.889);transform-origin:0 0;">ssl-date</div>
<div class="mono" style="left:124.8px;top:330.34px">2025-02-28T04:08:23+00:00; +7h00m08s from scanner time.</div>
<div class="t" style="left:85.6px;top:353.68px;font-size:9px;color:#222;transform:scaleX(0.889);transform-origin:0 0;">ssl-cert</div>
<div class="mono" style="left:124.8px;top:359.14px">Subject: commonName=DC01.certified.htb
Subject Alternative Name: othername: 1.3.6.1.4.1.311.25.1::&lt;unsupported&gt;, DNS:DC01.certified.htb
Issuer: commonName=certified-DC01-CA
Public Key type: rsa
Public Key bits: 2048
Signature Algorithm: sha256WithRSAEncryption
Not valid before: 2024-05-13T15:49:36
Not valid after:  2025-05-13T15:49:36
MD5:   4e1f:97f0:7c0a:d0ec:52e1:5f63:ec55:f3bc
SHA-1: 28e2:4c68:aa00:dd8b:ee91:564b:33fe:a345:116b:3828</div>
<svg style="left:0;top:-148px" width="1023" height="575" viewBox="0 0 1023 575"><rect x="58" y="163.0" width="737.5" height="1" fill="#1c1c1c"/><rect x="58" y="179.0" width="737.5" height="1" fill="#1c1c1c"/><rect x="58" y="194.5" width="737.5" height="1" fill="#1c1c1c"/><rect x="58" y="210.0" width="737.5" height="1" fill="#1c1c1c"/><rect x="58" y="225.8" width="737.5" height="1" fill="#1c1c1c"/><rect x="58" y="241.5" width="737.5" height="1" fill="#1c1c1c"/><rect x="58" y="257.3" width="737.5" height="1" fill="#1c1c1c"/><rect x="58" y="287.1" width="737.5" height="1" fill="#1c1c1c"/><rect x="58" y="404.0" width="737.5" height="1" fill="#1c1c1c"/><rect x="58" y="419.8" width="737.5" height="1" fill="#1c1c1c"/><rect x="58" y="435.6" width="737.5" height="1" fill="#1c1c1c"/><rect x="58" y="451.4" width="737.5" height="1" fill="#1c1c1c"/><rect x="58" y="467.0" width="737.5" height="1" fill="#1c1c1c"/><rect x="58" y="496.6" width="737.5" height="1" fill="#1c1c1c"/><rect x="57.9" y="163.0" width="1" height="412.5" fill="#1c1c1c"/><rect x="82.8" y="179.0" width="1" height="396.5" fill="#1c1c1c"/><rect x="122.0" y="163.0" width="1" height="412.5" fill="#1c1c1c"/><rect x="260.5" y="163.0" width="1" height="95.30000000000001" fill="#1c1c1c"/><rect x="260.5" y="404.0" width="1" height="64.0" fill="#1c1c1c"/><rect x="320.5" y="163.0" width="1" height="95.30000000000001" fill="#1c1c1c"/><rect x="320.5" y="404.0" width="1" height="64.0" fill="#1c1c1c"/><rect x="358.0" y="163.0" width="1" height="95.30000000000001" fill="#1c1c1c"/><rect x="358.0" y="404.0" width="1" height="64.0" fill="#1c1c1c"/><rect x="535.2" y="163.0" width="1" height="95.30000000000001" fill="#1c1c1c"/><rect x="535.2" y="404.0" width="1" height="64.0" fill="#1c1c1c"/><rect x="573.0" y="163.0" width="1" height="95.30000000000001" fill="#1c1c1c"/><rect x="573.0" y="404.0" width="1" height="64.0" fill="#1c1c1c"/><rect x="794.5" y="163.0" width="1" height="412.5" fill="#1c1c1c"/></svg>
<div class="t" style="left:963.4px;top:366.83px;font-size:6.7px;font-weight:bold;color:#111;">Go to top</div>
<div class="t" style="left:945.8px;top:383.93px;font-size:6.7px;font-weight:bold;color:#111;">Toggle Closed Ports</div>
<div class="t" style="left:944.6px;top:401.03px;font-size:6.7px;font-weight:bold;color:#111;">Toggle Filtered Ports</div>
<div class="a" style="left:1019.5px;top:104px;width:2.5px;height:115px;background:#8a8a8a;border-radius:1px;"></div>
</div>
<div class="a" style="left:0px;top:558px;width:1023px;height:17px;background:#282a36;"></div>
<div class="a" style="left:0px;top:558px;width:1023px;height:1px;background:#3a3b44;"></div>
<svg style="left:826px;top:561px" width="10" height="11" viewBox="0 0 10 11"><rect x="0" y="0" width="10" height="11" rx="1" fill="#2f86f0"/><circle cx="5" cy="5" r="3" fill="none" stroke="#fff" stroke-width="1.5"/><rect x="5" y="6" width="3" height="2" fill="#184a9a"/></svg>
<svg style="left:840.3px;top:561px" width="11" height="11"><circle cx="5.5" cy="5.5" r="5.3" fill="#6b6c72"/><circle cx="5.5" cy="5.5" r="0.8" fill="#333"/></svg>
<svg style="left:854.3px;top:561px" width="12" height="12" viewBox="0 0 12 12"><path d="M0 3 L3 0 V12 L0 9 Z" fill="#2aa0f8"/><rect x="3.5" y="3" width="2" height="6" fill="#5ec0ff"/><rect x="7" y="1" width="4" height="10" fill="#595a60"/></svg>
<svg style="left:869.2px;top:561px" width="11" height="11" viewBox="0 0 11 11"><rect x="4" y="0" width="7" height="6" fill="#3a7ee8" stroke="#ddd" stroke-width="0.8"/><rect x="0" y="4" width="7" height="6" fill="#3a7ee8" stroke="#ddd" stroke-width="0.8"/></svg>
<svg style="left:883.2px;top:561px" width="12" height="12" viewBox="0 0 12 12"><path d="M1 11 L2 7 L7 2 L10 5 L5 10 Z" fill="#3aa0f5"/><rect x="8" y="0.5" width="3.5" height="3.5" transform="rotate(45 9.75 2.25)" fill="#8cd0ff"/></svg>
<div class="a" style="left:897.7px;top:561.5px;width:10.4px;height:10.5px;background:#5a5b61;"></div>
<svg style="left:911.6px;top:561px" width="11" height="11" viewBox="0 0 11 11"><rect x="0.5" y="0.5" width="10" height="8" fill="#e6f0ff" stroke="#ccc" stroke-width="0.6"/><rect x="2" y="2" width="7" height="5" fill="#2a7ae8"/><rect x="3" y="9.3" width="5" height="1.5" fill="#ccc"/></svg>
<svg style="left:925.6px;top:561px" width="11" height="11" viewBox="0 0 11 11"><rect x="3.5" y="0" width="7.5" height="6.5" fill="#4a8ef0" stroke="#ddd" stroke-width="0.6"/><rect x="0" y="4" width="7" height="7" fill="#2a6fd8" stroke="#ddd" stroke-width="0.6"/></svg>
<svg style="left:940.3px;top:561px" width="11" height="11.5" viewBox="0 0 11 11.5"><rect x="0" y="0" width="7.5" height="11.5" rx="1" fill="#3a70d8"/><path d="M2 3 L3.75 8 L5.5 3" stroke="#fff" stroke-width="1.1" fill="none"/><rect x="9" y="0" width="1.8" height="11.5" fill="#111"/><rect x="9.3" y="5" width="1.2" height="6" fill="#7ad030"/><rect x="9.3" y="3" width="1.2" height="2" fill="#e8d020"/></svg>
<svg style="left:954.5px;top:561px" width="12" height="11.5" viewBox="0 0 12 11.5"><circle cx="5.5" cy="5.8" r="5.5" fill="#3a8ef0"/><path d="M4 2 L9 6 L4 10" stroke="#4ad030" stroke-width="3" fill="none"/></svg>
<svg style="left:968px;top:561px" width="11" height="11" viewBox="0 0 11 11"><rect x="0" y="0" width="11" height="11" rx="1" fill="#3a9af5"/><path d="M3.5 1.5 H7.5 V5 H9.5 L5.5 9.5 L1.5 5 H3.5 Z" fill="#4ad040"/></svg>
<div class="t" style="left:982.5px;top:563.07px;font-size:9.6px;color:#d8dbe2;letter-spacing:-0.1px">Right Ctrl</div>
</body></html>
